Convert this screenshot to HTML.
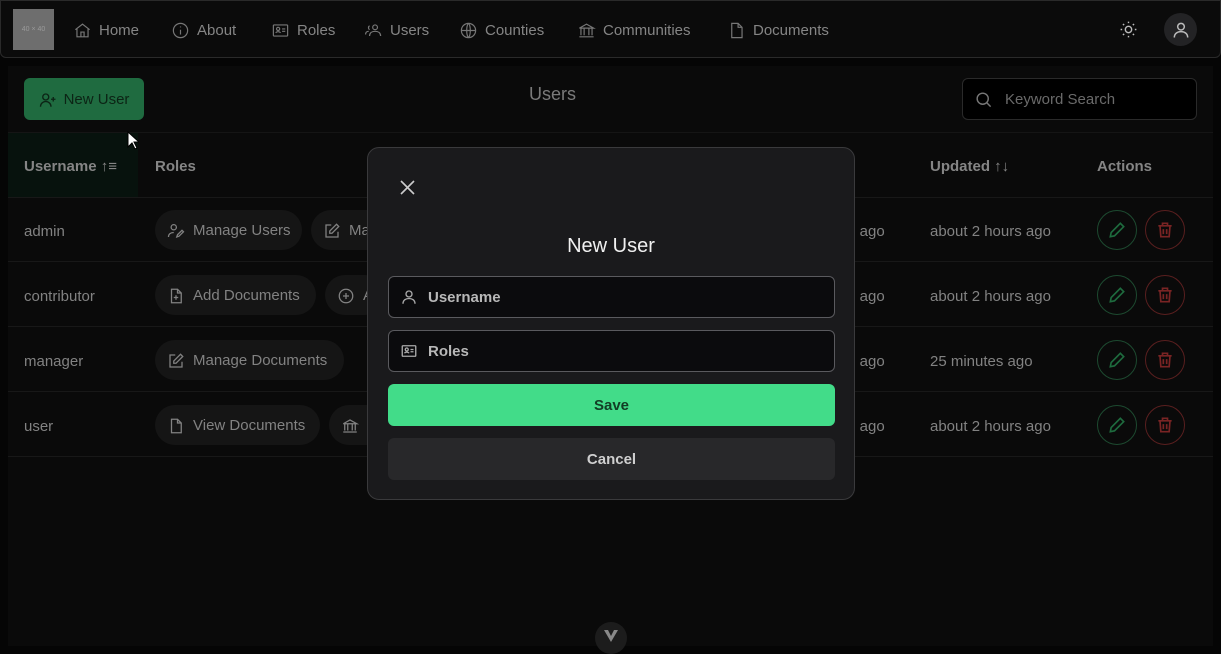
<!DOCTYPE html>
<html><head><meta charset="utf-8"><style>
*{box-sizing:border-box;margin:0;padding:0}
html,body{width:1221px;height:646px}
body{background:#050505;font-family:"Liberation Sans",sans-serif;position:relative;overflow:hidden;color:#808080}
.abs{position:absolute}
svg{display:block;flex:none}
.nav{left:0;top:0;width:1221px;height:58px;background:#0b0b0b;border:1px solid #2a2a2a;border-radius:0 0 6px 6px}
.ni{position:absolute;top:20px;font-size:15px;color:#858585;display:flex;align-items:center;gap:7px}
.panel{left:8px;top:66px;width:1205px;height:580px;background:#0a0a0a}
.hdr{font-weight:bold;font-size:15px;color:#858585;top:158px}
.row{left:8px;width:1205px;height:65px;border-bottom:1px solid #181818}
.cell{font-size:15px;color:#828282}
.chip{height:40px;border-radius:20px;background:#151515;display:flex;align-items:center;gap:8px;padding:0 12px;font-size:15px;color:#828282;overflow:hidden;white-space:nowrap;padding-top:1px}
.circ{width:40px;height:40px;border-radius:50%;display:flex;align-items:center;justify-content:center}
.g{border:1px solid #1d4a30}.r{border:1px solid #5a1f1f}
.modal{left:367px;top:147px;width:488px;height:353px;background:#1a1a1c;border:1px solid #3a3a3c;border-radius:12px}
.inp{left:20px;width:447px;height:42px;background:#0b0b0d;border:1px solid #5a5a5e;border-radius:6px;display:flex;align-items:center;gap:10px;padding-left:11px;font-size:15px;font-weight:bold;color:#b8b8b8}
.btn{left:20px;width:447px;height:42px;border-radius:6px;display:flex;align-items:center;justify-content:center;font-size:15px;font-weight:bold}
</style></head><body>
<div class="abs nav">
 <div class="abs" style="left:12px;top:8px;width:41px;height:41px;background:#6e6e6e;color:#9a9a9a;font-size:7px;display:flex;align-items:center;justify-content:center">40 × 40</div>
 <div class="ni" style="left:72px"><svg width="19" height="19" viewBox="0 0 24 24" fill="none" stroke="#777" stroke-width="1.5"><path d="M3 11l9-7 9 7M5 10v10h14V10M10 20v-6h4v6"/></svg>Home</div>
 <div class="ni" style="left:170px"><svg width="19" height="19" viewBox="0 0 24 24" fill="none" stroke="#777" stroke-width="1.5"><circle cx="12" cy="12" r="9"/><path d="M12 11v6M12 7v1"/></svg>About</div>
 <div class="ni" style="left:270px"><svg width="19" height="19" viewBox="0 0 24 24" fill="none" stroke="#777" stroke-width="1.5"><rect x="3" y="5" width="18" height="14" rx="1"/><circle cx="9" cy="10" r="2"/><path d="M6 15c1-2 5-2 6 0M14 10h4M14 13h4"/></svg>Roles</div>
 <div class="ni" style="left:363px"><svg width="19" height="19" viewBox="0 0 24 24" fill="none" stroke="#777" stroke-width="1.5"><circle cx="14" cy="8" r="3"/><path d="M7 19c0-4 3-6 7-6s7 2 7 6M7 6a3 3 0 0 0 0 5M2 17c0-3 2-4 4-4"/></svg>Users</div>
 <div class="ni" style="left:458px"><svg width="19" height="19" viewBox="0 0 24 24" fill="none" stroke="#777" stroke-width="1.5"><circle cx="12" cy="12" r="9"/><path d="M3 12h18M12 3c3 3 3 15 0 18M12 3c-3 3-3 15 0 18"/></svg>Counties</div>
 <div class="ni" style="left:576px"><svg width="19" height="19" viewBox="0 0 24 24" fill="none" stroke="#777" stroke-width="1.5"><path d="M3 9l9-5 9 5H3M5 9v9M9 9v9M15 9v9M19 9v9M3 20h18"/></svg>Communities</div>
 <div class="ni" style="left:726px"><svg width="19" height="19" viewBox="0 0 24 24" fill="none" stroke="#777" stroke-width="1.5"><path d="M6 3h8l5 5v13H6zM14 3v5h5"/></svg>Documents</div>
 <svg class="abs" style="left:1118px;top:19px" width="19" height="19" viewBox="0 0 24 24" fill="none" stroke="#bbb" stroke-width="1.8"><circle cx="12" cy="12" r="4"/><path d="M12 2v2M12 20v2M2 12h2M20 12h2M5 5l1.5 1.5M17.5 17.5L19 19M5 19l1.5-1.5M17.5 6.5L19 5"/></svg>
 <div class="abs" style="left:1163px;top:12px;width:33px;height:33px;border-radius:50%;background:#232325;display:flex;align-items:center;justify-content:center"><svg width="20" height="20" viewBox="0 0 24 24" fill="none" stroke="#bbb" stroke-width="1.8"><circle cx="12" cy="8" r="4"/><path d="M4 21c0-5 4-7 8-7s8 2 8 7"/></svg></div>
</div>
<div class="abs panel"></div>
<div class="abs" style="left:24px;top:78px;width:120px;height:42px;background:#1f6b40;border-radius:6px;display:flex;align-items:center;justify-content:center;gap:7px;font-size:15px;color:#0c2415;padding-top:1px"><svg width="18" height="18" viewBox="0 0 24 24" fill="none" stroke="#0c2415" stroke-width="1.8"><circle cx="9" cy="8" r="4"/><path d="M2 21c0-4 3-7 7-7s7 3 7 7M19 8v6M16 11h6"/></svg>New User</div>
<div class="abs" style="left:529px;top:84px;font-size:18px;color:#7a7a7a">Users</div>
<div class="abs" style="left:962px;top:78px;width:235px;height:42px;background:#000;border:1px solid #2a2a2a;border-radius:6px;display:flex;align-items:center;gap:12px;padding-left:11px;font-size:15px;color:#6a6a6a;padding-top:1px"><svg width="19" height="19" viewBox="0 0 24 24" fill="none" stroke="#777" stroke-width="1.8"><circle cx="11" cy="11" r="7"/><path d="M16 16l5 5"/></svg>Keyword Search</div>
<div class="abs" style="left:8px;top:132px;width:1205px;height:1px;background:#151515"></div>
<div class="abs" style="left:8px;top:133px;width:130px;height:64px;background:#07120d"></div>
<div class="abs hdr" style="left:24px">Username <span style="font-weight:normal">↑≡</span></div>
<div class="abs hdr" style="left:155px">Roles</div>
<div class="abs hdr" style="left:930px">Updated <span style="font-weight:normal">↑↓</span></div>
<div class="abs hdr" style="left:1097px">Actions</div>
<div class="abs" style="left:8px;top:197px;width:1205px;height:1px;background:#181818"></div>
<div class="abs row" style="top:197px"></div><div class="abs row" style="top:262px"></div><div class="abs row" style="top:327px"></div><div class="abs row" style="top:392px"></div>
<div class="abs cell" style="left:24px;top:223px">admin</div>
<div class="abs cell" style="left:24px;top:288px">contributor</div>
<div class="abs cell" style="left:24px;top:353px">manager</div>
<div class="abs cell" style="left:24px;top:418px">user</div>
<div class="abs chip" style="left:155px;top:210px;width:147px"><svg width="18" height="18" viewBox="0 0 24 24" fill="none" stroke="#828282" stroke-width="1.7"><circle cx="9" cy="7" r="3.5"/><path d="M2 20c0-4 3-6 7-6M13 20l1-3 6-6 2 2-6 6z"/></svg>Manage Users</div>
<div class="abs chip" style="left:311px;top:210px;width:80px"><svg width="18" height="18" viewBox="0 0 24 24" fill="none" stroke="#828282" stroke-width="1.7"><path d="M11 4H4v16h16v-7M18 3l3 3-9 9H9v-3z"/></svg>Ma</div>
<div class="abs chip" style="left:155px;top:275px;width:161px"><svg width="18" height="18" viewBox="0 0 24 24" fill="none" stroke="#828282" stroke-width="1.7"><path d="M6 3h8l5 5v13H6zM14 3v5h5M12 11v6M9 14h6"/></svg>Add Documents</div>
<div class="abs chip" style="left:325px;top:275px;width:60px"><svg width="18" height="18" viewBox="0 0 24 24" fill="none" stroke="#828282" stroke-width="1.7"><circle cx="12" cy="12" r="9"/><path d="M12 8v8M8 12h8"/></svg>A</div>
<div class="abs chip" style="left:155px;top:340px;width:189px"><svg width="18" height="18" viewBox="0 0 24 24" fill="none" stroke="#828282" stroke-width="1.7"><path d="M11 4H4v16h16v-7M18 3l3 3-9 9H9v-3z"/></svg>Manage Documents</div>
<div class="abs chip" style="left:155px;top:405px;width:165px"><svg width="18" height="18" viewBox="0 0 24 24" fill="none" stroke="#828282" stroke-width="1.7"><path d="M6 3h8l5 5v13H6zM14 3v5h5"/></svg>View Documents</div>
<div class="abs chip" style="left:329px;top:405px;width:60px"><svg width="18" height="18" viewBox="0 0 24 24" fill="none" stroke="#828282" stroke-width="1.7"><path d="M3 9l9-5 9 5H3M5 9v9M9 9v9M15 9v9M19 9v9M3 20h18"/></svg></div>
<div class="abs cell" style="left:848px;top:223px">s ago</div><div class="abs cell" style="left:848px;top:288px">s ago</div><div class="abs cell" style="left:848px;top:353px">s ago</div><div class="abs cell" style="left:848px;top:418px">s ago</div>
<div class="abs cell" style="left:930px;top:223px">about 2 hours ago</div>
<div class="abs cell" style="left:930px;top:288px">about 2 hours ago</div>
<div class="abs cell" style="left:930px;top:353px">25 minutes ago</div>
<div class="abs cell" style="left:930px;top:418px">about 2 hours ago</div>
<div class="abs circ g" style="left:1097px;top:210px"><svg width="20" height="20" viewBox="0 0 24 24" fill="none" stroke="#1e6b3e" stroke-width="2"><path d="M4 20l1-5L16 4l4 4L9 19z"/></svg></div>
<div class="abs circ r" style="left:1145px;top:210px"><svg width="20" height="20" viewBox="0 0 24 24" fill="none" stroke="#7a2424" stroke-width="2"><path d="M4 7h16M9 7V4h6v3M6 7l1 13h10l1-13M10 11v6M14 11v6"/></svg></div>
<div class="abs circ g" style="left:1097px;top:275px"><svg width="20" height="20" viewBox="0 0 24 24" fill="none" stroke="#1e6b3e" stroke-width="2"><path d="M4 20l1-5L16 4l4 4L9 19z"/></svg></div>
<div class="abs circ r" style="left:1145px;top:275px"><svg width="20" height="20" viewBox="0 0 24 24" fill="none" stroke="#7a2424" stroke-width="2"><path d="M4 7h16M9 7V4h6v3M6 7l1 13h10l1-13M10 11v6M14 11v6"/></svg></div>
<div class="abs circ g" style="left:1097px;top:340px"><svg width="20" height="20" viewBox="0 0 24 24" fill="none" stroke="#1e6b3e" stroke-width="2"><path d="M4 20l1-5L16 4l4 4L9 19z"/></svg></div>
<div class="abs circ r" style="left:1145px;top:340px"><svg width="20" height="20" viewBox="0 0 24 24" fill="none" stroke="#7a2424" stroke-width="2"><path d="M4 7h16M9 7V4h6v3M6 7l1 13h10l1-13M10 11v6M14 11v6"/></svg></div>
<div class="abs circ g" style="left:1097px;top:405px"><svg width="20" height="20" viewBox="0 0 24 24" fill="none" stroke="#1e6b3e" stroke-width="2"><path d="M4 20l1-5L16 4l4 4L9 19z"/></svg></div>
<div class="abs circ r" style="left:1145px;top:405px"><svg width="20" height="20" viewBox="0 0 24 24" fill="none" stroke="#7a2424" stroke-width="2"><path d="M4 7h16M9 7V4h6v3M6 7l1 13h10l1-13M10 11v6M14 11v6"/></svg></div>
<div class="abs" style="left:595px;top:622px;width:32px;height:32px;border-radius:50%;background:#1c1c1c;display:flex;justify-content:center;padding-top:8px"><svg width="14" height="12" viewBox="0 0 14 12"><path d="M0 0h4l3 6 3-6h4L7 12z" fill="#888"/></svg></div>
<div class="abs modal">
 <svg class="abs" style="left:32px;top:32px" width="15" height="15" viewBox="0 0 15 15" stroke="#ccc" stroke-width="1.6"><path d="M1 1l13 13M14 1L1 14"/></svg>
 <div class="abs" style="left:0;width:486px;top:87px;text-align:center;font-size:20px;color:#f0f0f0">New User</div>
 <div class="abs inp" style="top:128px"><svg width="18" height="18" viewBox="0 0 24 24" fill="none" stroke="#aaa" stroke-width="1.8"><circle cx="12" cy="8" r="4"/><path d="M4 21c0-5 4-7 8-7s8 2 8 7"/></svg>Username</div>
 <div class="abs inp" style="top:182px"><svg width="18" height="18" viewBox="0 0 24 24" fill="none" stroke="#aaa" stroke-width="1.8"><rect x="3" y="5" width="18" height="14" rx="1"/><circle cx="9" cy="10" r="2"/><path d="M6 15c1-2 5-2 6 0M14 10h4M14 13h4"/></svg>Roles</div>
 <div class="abs btn" style="top:236px;background:#42dc89;color:#123d25">Save</div>
 <div class="abs btn" style="top:290px;background:#28282a;color:#cfcfcf">Cancel</div>
</div>
<svg class="abs" style="left:127px;top:131px" width="12" height="19" viewBox="0 0 12 19"><path d="M1 1v15l4-4 3 6 2-1-3-6h5z" fill="#fff" stroke="#000"/></svg>
</body></html>
